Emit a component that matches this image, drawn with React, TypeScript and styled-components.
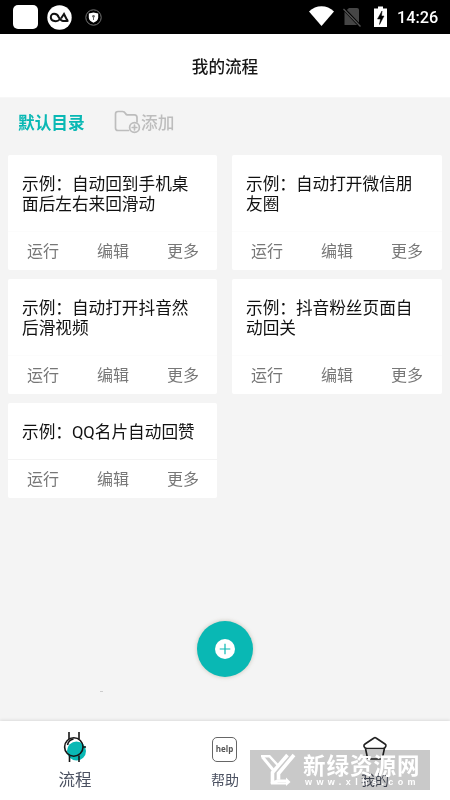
import React from 'react';
import styled, { createGlobalStyle } from 'styled-components';

const TEAL = '#09b8b4';

const GlobalStyle = createGlobalStyle`
  * { box-sizing: border-box; }
  body { margin: 0; background: #f4f4f4; font-family: Roboto, "Noto Sans CJK SC", sans-serif; }
`;

const Screen = styled.div`
  position: relative;
  display: flex;
  flex-direction: column;
  width: 450px;
  height: 800px;
  overflow: hidden;
  background: #f4f4f4;
`;

const StatusBar = styled.div`
  display: flex;
  align-items: center;
  flex: none;
  height: 34px;
  padding: 0 12px 0 13px;
  background: #000;
  color: #fff;
`;

const AppSquare = styled.div`
  width: 25px;
  height: 24px;
  margin-right: 9px;
  border-radius: 5px;
  background: #fff;
`;

const IconGap = styled.div`
  display: flex;
  margin-left: 13px;
`;

const Spacer = styled.div`
  flex: 1;
`;

const Clock = styled.span`
  margin-left: 10px;
  width: 41px;
  padding-top: 1px;
  font-size: 16.3px;
  font-weight: 500;
  line-height: 33px;
  white-space: nowrap;
`;

const Header = styled.header`
  display: flex;
  align-items: center;
  justify-content: center;
  flex: none;
  height: 64px;
  background: #fff;
  border-bottom: 1px solid #f7f7f7;
  color: #181818;
  font-size: 16.6px;
  font-weight: 500;
  padding-top: 1px;
`;

const Folders = styled.div`
  display: flex;
  align-items: center;
  flex: none;
  height: 57px;
  padding: 0 18px 9px;
  font-size: 16.7px;
`;

const ActiveFolder = styled.span`
  width: 96px;
  color: ${TEAL};
  font-weight: 700;
`;

const AddFolder = styled.span`
  display: flex;
  align-items: center;
  color: #bdbdbd;
  font-weight: 500;
`;

const CardGrid = styled.main`
  display: grid;
  grid-template-columns: 209px 210px;
  column-gap: 15px;
  row-gap: 9px;
  align-content: start;
  flex: 1;
  padding: 0 8px;
`;

const Card = styled.article`
  background: #fff;
  border-radius: 2px;
`;

const CardTitle = styled.h2`
  margin: 0;
  padding: 20px 14px 16px 14px;
  color: #111;
  font-size: 16.65px;
  font-weight: 400;
  line-height: 20px;
  white-space: pre;
`;

const Actions = styled.div<{ $line: string }>`
  display: grid;
  grid-template-columns: repeat(3, 70px);
  height: 39px;
  border-top: 1px solid ${(p) => p.$line};
  color: #777;
  font-size: 16px;
  line-height: 40px;
  text-align: center;
`;

const AddButton = styled.button`
  position: absolute;
  left: 197px;
  top: 621px;
  display: flex;
  align-items: center;
  justify-content: center;
  width: 56px;
  height: 56px;
  padding: 0;
  border: 0;
  border-radius: 50%;
  background: ${TEAL};
  box-shadow: 0 0 4px rgba(130, 120, 90, 0.4);
`;

const TabBar = styled.nav`
  display: grid;
  grid-template-columns: repeat(3, 1fr);
  flex: none;
  height: 79px;
  background: #fff;
  box-shadow: 0 -1px 3px rgba(0, 0, 0, 0.1);
`;

const Tab = styled.div<{ $size: number; $gap: number }>`
  display: flex;
  flex-direction: column;
  align-items: center;
  gap: ${(p) => p.$gap}px;
  padding-top: 10px;
  color: #4c5262;
  font-size: ${(p) => p.$size}px;
  line-height: 22px;
`;

const HelpBox = styled.div`
  width: 25px;
  height: 25px;
  margin: 6px 1px 0 0;
  border: 1.5px solid #666;
  border-radius: 5px;
  color: #555;
  font: 700 8px/21px "Open Sans", sans-serif;
  text-align: center;
`;

const WatermarkShade = styled.div`
  position: absolute;
  left: 250px;
  top: 750px;
  width: 180px;
  height: 40px;
  background: #c9c9c9;
  mix-blend-mode: multiply;
`;

const Watermark = styled.div`
  position: absolute;
  left: 250px;
  top: 750px;
  display: flex;
  width: 180px;
  height: 40px;
  padding-left: 10px;
  color: #fff;
`;

const WatermarkText = styled.div`
  display: flex;
  flex-direction: column;
  margin-left: 3px;
  white-space: nowrap;
`;

const SiteName = styled.span`
  height: 27px;
  font-size: 22.5px;
  font-weight: 700;
  line-height: 32px;
  letter-spacing: 1px;
`;

const SiteUrl = styled.span`
  padding-left: 2px;
  font: 700 9px/10px "Liberation Sans", sans-serif;
  letter-spacing: 4.4px;
`;

const Speck = styled.i`
  position: absolute;
  left: 100px;
  top: 691px;
  width: 3px;
  height: 1px;
  background: #ccc;
`;

const BadgeIcon = () => (
  <svg width="25" height="25" viewBox="0 0 25 25">
    <circle cx="12.5" cy="12.5" r="12.2" fill="#fff" />
    <path d="M3.800 12.300C3.800 7.500 10 7.800 11.800 12.300S17 16 21.500 15.800M12.500 14.500C10.500 17.200 3.800 16.800 3.800 12.300M14 13.500 17 9 20.800 16.500" fill="none" stroke="#111" strokeWidth="2" />
  </svg>
);

const ShieldIcon = () => (
  <svg width="17" height="17" viewBox="0 0 17 17">
    <circle cx="8.500" cy="8.500" r="7.700" fill="none" stroke="#777" strokeWidth="1" />
    <path d="M8.500 3.500 13.200 4.500v4c0 2.500-2.200 4.200-4.700 5.300C6 12.700 3.800 11 3.800 8.500v-4z" fill="#fff" />
    <circle cx="8.500" cy="7.300" r="1.300" fill="#666" />
    <path d="M8.500 8v3" stroke="#666" />
  </svg>
);

const StatusIcons = () => (
  <svg width="80" height="24" viewBox="0 0 80 24">
    <path d="M2 6.500C9-.5 20-.5 27 6.500L14.500 21z" fill="#fff" />
    <path d="M42 3h8q2 0 2 2v15H37.500V7z" fill="#464646" />
    <path d="M36.500 3.500 53.500 21.500" stroke="#000" strokeWidth="3" />
    <path d="M36.500 4 53.500 21.500" stroke="#555" strokeWidth="1.300" />
    <path d="M71 1.500h5v2h4V22H67V3.500h4z" fill="#fff" />
    <path d="M75 6 70.500 14H73.500L72.500 19.500 77 11H74.500z" fill="#000" stroke="#000" strokeWidth=".5" />
  </svg>
);

const FolderIcon = () => (
  <svg width="27" height="24" viewBox="0 0 27 24" fill="none" stroke="#bdbdbd" strokeWidth="1.700" strokeLinecap="round">
    <path d="M14.500 20.500H4Q1.500 20.500 1.500 18V4Q1.500 1.500 4 1.500H8.500Q10.500 1.500 11.500 3.500T14.500 4.800H20.500Q23 4.800 23 7.500V12" />
    <circle cx="20.500" cy="17.500" r="4.900" />
    <path d="M20.500 15.200v4.600M18.200 17.500h4.600" />
  </svg>
);

const WatchIcon = () => (
  <svg width="26" height="33" viewBox="0 0 26 33">
    <circle cx="14.500" cy="20" r="9.500" fill={TEAL} />
    <g fill="none" stroke="#171717" strokeWidth="1.600">
      <circle cx="11.800" cy="16" r="9.200" />
      <path d="M7 1v7M17 1v7M7.500 24.500V31M17 24.500V31M21 16h3M5.500 14q1-5 6-6" />
    </g>
  </svg>
);

const ProfileIcon = () => (
  <svg width="26" height="33" viewBox="0 0 26 33" fill="none" stroke="#222" strokeWidth="1.600" strokeLinejoin="round">
    <path d="M12 7q1-.8 2 0l9 6q1.500 1 .8 2.400-.8 2-2.800 2.100H5q-2.300 0-3-2-.5-1.500 1-2.500zM3.500 17.500l2 9.500q.4 1 1.500 1h12q1 0 1.400-1l2-9.500" />
  </svg>
);

const PlusIcon = () => (
  <svg width="20" height="20" viewBox="0 0 20 20">
    <circle cx="10" cy="10" r="10" fill="#fff" />
    <path d="M10 4.700v10.600M4.700 10h10.600" stroke={TEAL} strokeWidth="1.200" />
  </svg>
);

const BrandMark = () => (
  <svg width="40" height="40" viewBox="0 0 40 40" fill="none" stroke="#fff">
    <path d="M1 6.200H9.500L18.500 16" strokeWidth="2.400" />
    <path d="M2.500 7 14 21" strokeWidth="3" />
    <path d="M27.500 5 12.500 22.500V34" strokeWidth="3.600" />
    <path d="M34 5 18.500 23.500V29.800" strokeWidth="3.600" />
    <path d="M11 33.200 17.500 30.800H27M11 33.400H27" strokeWidth="2.400" />
    <path d="M26 27.500 30.500 32 26 36z" fill="#fff" stroke="none" />
  </svg>
);

const flows = [
  { title: '示例：自动回到手机桌\n面后左右来回滑动' },
  { title: '示例：自动打开微信朋\n友圈' },
  { title: '示例：自动打开抖音然\n后滑视频' },
  { title: '示例：抖音粉丝页面自\n动回关' },
  { title: '示例：QQ名片自动回赞', line: '#f3f3f3' },
];

export default function App() {
  return (
    <Screen>
      <GlobalStyle />
      <StatusBar>
        <AppSquare />
        <BadgeIcon />
        <IconGap><ShieldIcon /></IconGap>
        <Spacer />
        <StatusIcons />
        <Clock>14:26</Clock>
      </StatusBar>
      <Header>我的流程</Header>
      <Folders>
        <ActiveFolder>默认目录</ActiveFolder>
        <AddFolder><FolderIcon />添加</AddFolder>
      </Folders>
      <CardGrid>
        {flows.map((flow) => (
          <Card key={flow.title}>
            <CardTitle>{flow.title}</CardTitle>
            <Actions $line={flow.line ?? '#fcfcfc'}>
              <span>运行</span>
              <span>编辑</span>
              <span>更多</span>
            </Actions>
          </Card>
        ))}
      </CardGrid>
      <Speck />
      <AddButton aria-label="添加"><PlusIcon /></AddButton>
      <TabBar>
        <Tab $size={16.5} $gap={6}><WatchIcon />流程</Tab>
        <Tab $size={14} $gap={7}><HelpBox>help</HelpBox>帮助</Tab>
        <Tab $size={14} $gap={5}><ProfileIcon />我的</Tab>
      </TabBar>
      <WatermarkShade />
      <Watermark>
        <BrandMark />
        <WatermarkText>
          <SiteName>新绿资源网</SiteName>
          <SiteUrl>www.xlhs.com</SiteUrl>
        </WatermarkText>
      </Watermark>
    </Screen>
  );
}
